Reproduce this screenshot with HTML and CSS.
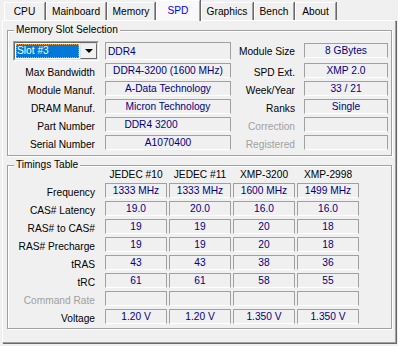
FILE: index.html
```html
<!DOCTYPE html>
<html>
<head>
<meta charset="utf-8">
<link rel="stylesheet" href="styles.css">
</head>
<body>
<div class="tabs">
  <div class="tab t-cpu">CPU</div>
  <div class="tab t-main">Mainboard</div>
  <div class="tab t-mem">Memory</div>
  <div class="tab t-spd active">SPD</div>
  <div class="tab t-gfx">Graphics</div>
  <div class="tab t-bench">Bench</div>
  <div class="tab t-about">About</div>
</div>
<div class="panel">
  <fieldset class="group slot-group">
    <legend>Memory Slot Selection</legend>
    <div class="slot-grid">
      <div class="combo">
        <div class="combo-inner">
          <div class="sel">Slot #3</div>
          <div class="btn"><span class="arrow"></span></div>
        </div>
      </div>
      <div class="field type">DDR4</div>
      <div class="lbl rl">Module Size</div>
      <div class="field rf first">8 GBytes</div>

      <div class="lbl">Max Bandwidth</div>
      <div class="field">DDR4-3200 (1600 MHz)</div>
      <div class="lbl rl">SPD Ext.</div>
      <div class="field rf">XMP 2.0</div>

      <div class="lbl">Module Manuf.</div>
      <div class="field">A-Data Technology</div>
      <div class="lbl rl">Week/Year</div>
      <div class="field rf">33 / 21</div>

      <div class="lbl">DRAM Manuf.</div>
      <div class="field">Micron Technology</div>
      <div class="lbl rl">Ranks</div>
      <div class="field rf">Single</div>

      <div class="lbl">Part Number</div>
      <div class="field"><span class="part">DDR4 3200</span></div>
      <div class="lbl rl disabled">Correction</div>
      <div class="field rf"></div>

      <div class="lbl">Serial Number</div>
      <div class="field">A1070400</div>
      <div class="lbl rl disabled">Registered</div>
      <div class="field rf"></div>
    </div>
  </fieldset>

  <fieldset class="group timing-group">
    <legend>Timings Table</legend>
    <div class="timing-grid">
      <div></div>
      <div class="head">JEDEC #10</div>
      <div class="head">JEDEC #11</div>
      <div class="head">XMP-3200</div>
      <div class="head">XMP-2998</div>

      <div class="lbl">Frequency</div>
      <div class="field">1333 MHz</div>
      <div class="field">1333 MHz</div>
      <div class="field">1600 MHz</div>
      <div class="field">1499 MHz</div>

      <div class="lbl">CAS# Latency</div>
      <div class="field">19.0</div>
      <div class="field">20.0</div>
      <div class="field">16.0</div>
      <div class="field">16.0</div>

      <div class="lbl">RAS# to CAS#</div>
      <div class="field">19</div>
      <div class="field">19</div>
      <div class="field">20</div>
      <div class="field">18</div>

      <div class="lbl">RAS# Precharge</div>
      <div class="field">19</div>
      <div class="field">19</div>
      <div class="field">20</div>
      <div class="field">18</div>

      <div class="lbl">tRAS</div>
      <div class="field">43</div>
      <div class="field">43</div>
      <div class="field">38</div>
      <div class="field">36</div>

      <div class="lbl">tRC</div>
      <div class="field">61</div>
      <div class="field">61</div>
      <div class="field">58</div>
      <div class="field">55</div>

      <div class="lbl disabled">Command Rate</div>
      <div class="field"></div>
      <div class="field"></div>
      <div class="field"></div>
      <div class="field"></div>

      <div class="lbl">Voltage</div>
      <div class="field">1.20 V</div>
      <div class="field">1.20 V</div>
      <div class="field">1.350 V</div>
      <div class="field">1.350 V</div>
    </div>
  </fieldset>
</div>
</body>
</html>
```

FILE: styles.css
```css
* { box-sizing: border-box; }
html, body { margin: 0; padding: 0; }
body {
  width: 398px;
  height: 346px;
  overflow: hidden;
  background: #f0f0f0;
  font-family: "Liberation Sans", Arial, sans-serif;
  font-size: 10.2px;
  color: #000;
}

/* Tabs */
.tabs {
  display: flex;
  align-items: flex-end;
  height: 20px;
  padding-left: 4px;
  position: relative;
  z-index: 2;
}
.tab {
  height: 18px;
  margin-right: 1px;
  padding-top: 1px;
  line-height: 16px;
  text-align: center;
  white-space: nowrap;
  background: #f0f0f0;
  border-top: 1px solid #fff;
  border-left: 1px solid #fff;
  border-right: 1px solid #a0a0a0;
  box-shadow: 1px 0 0 #696969;
}
.tab.active {
  height: 21px;
  margin-bottom: -1px;
  padding-top: 2px;
  background: #f9f9f9;
  color: #0000ff;
}
.t-cpu { width: 41px; }
.t-main { width: 60px; }
.t-mem { width: 48px; }
.t-spd { width: 44px; }
.t-gfx { width: 52px; }
.t-bench { width: 40px; }
.t-about { width: 41px; }

/* Panel */
.panel {
  position: relative;
  z-index: 1;
  margin-left: 2px;
  width: 394px;
  height: 323px;
  padding-left: 4px;
  border-top: 1px solid #fff;
  border-left: 1px solid #fff;
  border-right: 1px solid #a0a0a0;
  border-bottom: 1px solid #a0a0a0;
  box-shadow: 1px 1px 0 #696969;
}

/* Group boxes */
.group {
  width: 385px;
  min-width: 0;
  margin: 3px 0 0 0;
  border: 1px solid #a0a0a0;
  box-shadow: 1px 1px 0 #fff, inset 1px 1px 0 #fff;
}
.group legend {
  margin-left: 1px;
  padding: 0 2px;
  line-height: 12px;
  background: #f0f0f0;
}
.slot-group { padding: 5px 3px 5px 5px; }
.timing-group { padding: 0 3px 4px 5px; }

/* Memory slot grid */
.slot-grid {
  display: grid;
  grid-template-columns: 92px 126px 73px 84px;
  grid-template-rows: 19px repeat(5, 15px);
  row-gap: 3px;
}
.lbl {
  text-align: right;
  padding-right: 10px;
  padding-top: 2px;
  line-height: 15px;
  white-space: nowrap;
}
.lbl.rl { padding-right: 9px; }
.slot-grid .lbl.rl:nth-child(3) { align-self: center; }
.disabled { color: #a0a0a0; }

.field {
  height: 15px;
  line-height: 14px;
  text-align: center;
  color: #000080;
  white-space: nowrap;
  overflow: hidden;
  border-top: 1px solid #a0a0a0;
  border-left: 1px solid #a0a0a0;
  border-right: 1px solid #a0a0a0;
  border-bottom: 1px solid #fff;
}
.field.type {
  height: 18px;
  align-self: end;
  text-align: left;
  padding-left: 2px;
  padding-top: 1px;
  line-height: 16px;
}
.field.first { align-self: center; }
.part { padding-right: 34px; }

/* Combo box */
.combo {
  width: 86px;
  height: 20px;
  border-top: 1px solid #a0a0a0;
  border-left: 1px solid #a0a0a0;
  border-right: 1px solid #fff;
  border-bottom: 1px solid #fff;
}
.combo-inner {
  display: flex;
  height: 100%;
  background: #fff;
  border-top: 1px solid #696969;
  border-left: 1px solid #696969;
  border-right: 1px solid #e3e3e3;
  border-bottom: 1px solid #e3e3e3;
}
.sel {
  flex: 1;
  margin: 1px;
  padding-left: 1px;
  background: #0078d7;
  color: #fff;
  line-height: 14px;
  outline: 1px dotted #f0a040;
  outline-offset: -1px;
  white-space: nowrap;
}
.btn {
  width: 17px;
  display: flex;
  align-items: center;
  justify-content: center;
  background: #f0f0f0;
  border-top: 1px solid #e3e3e3;
  border-left: 1px solid #e3e3e3;
  border-right: 1px solid #696969;
  border-bottom: 1px solid #696969;
}
.arrow {
  width: 0;
  height: 0;
  border-left: 4px solid transparent;
  border-right: 4px solid transparent;
  border-top: 4px solid #000;
}

/* Timings grid */
.timing-grid {
  display: grid;
  grid-template-columns: 90px repeat(4, 62px);
  column-gap: 2px;
  grid-template-rows: 9px repeat(8, 15px);
  row-gap: 3px;
}
.timing-grid .lbl { padding-right: 8px; }
.head {
  text-align: center;
  line-height: 12px;
  margin-top: -2px;
  white-space: nowrap;
}
```
